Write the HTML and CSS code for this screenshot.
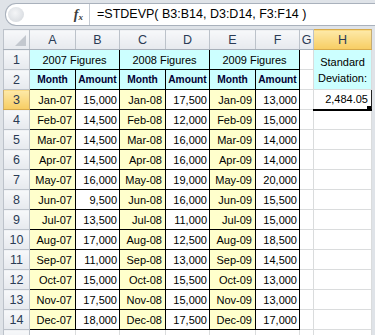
FILE: index.html
```html
<!DOCTYPE html>
<html lang="en">

<head>
    <meta charset="UTF-8">
    <meta name="viewport" content="width=device-width, initial-scale=1.0">

    <title>STDEVP</title>

    <link rel="stylesheet" href="styles.css">
</head>

<body>
    <!-- Formula bar -->
    <div class="formula-bar">
        <div class="fx-field">
            <div class="fx-tools">
                <span class="collapse-btn"></span>
                <span class="fx-label"><i>f</i><sub>x</sub></span>
            </div>
            <div class="formula">=STDEVP( B3:B14, D3:D14, F3:F14 )</div>
        </div>
    </div>

    <!-- Sheet grid -->
    <table class="sheet">
        <colgroup>
            <col class="c-rh">
            <col class="c-mo"><col class="c-amt">
            <col class="c-mo"><col class="c-amt">
            <col class="c-mo"><col class="c-amt">
            <col class="c-g"><col class="c-h">
        </colgroup>
        <tr class="col-heads">
            <th class="corner"><span class="corner-tri"></span></th>
            <th>A</th><th>B</th><th>C</th><th>D</th><th>E</th><th>F</th><th>G</th>
            <th class="active">H</th>
        </tr>
        <tr>
            <th class="rh">1</th>
            <td class="bx hd" colspan="2">2007 Figures</td>
            <td class="bx hd" colspan="2">2008 Figures</td>
            <td class="bx hd" colspan="2">2009 Figures</td>
            <td></td>
            <td class="hd std" rowspan="2">Standard<br>Deviation:</td>
        </tr>
        <tr>
            <th class="rh">2</th>
            <td class="bx hd b">Month</td><td class="bx hd b">Amount</td>
            <td class="bx hd b">Month</td><td class="bx hd b">Amount</td>
            <td class="bx hd b">Month</td><td class="bx hd b">Amount</td>
            <td></td>
        </tr>
        <tr>
            <th class="rh active">3</th>
            <td class="bx mo">Jan-07</td><td class="bx amt">15,000</td>
            <td class="bx mo">Jan-08</td><td class="bx amt">17,500</td>
            <td class="bx mo">Jan-09</td><td class="bx amt">13,000</td>
            <td></td>
            <td class="amt sel">2,484.05<span class="fill-handle"></span></td>
        </tr>
        <tr>
            <th class="rh">4</th>
            <td class="bx mo">Feb-07</td><td class="bx amt">14,500</td>
            <td class="bx mo">Feb-08</td><td class="bx amt">12,000</td>
            <td class="bx mo">Feb-09</td><td class="bx amt">15,000</td>
            <td></td><td></td>
        </tr>
        <tr>
            <th class="rh">5</th>
            <td class="bx mo">Mar-07</td><td class="bx amt">14,500</td>
            <td class="bx mo">Mar-08</td><td class="bx amt">16,000</td>
            <td class="bx mo">Mar-09</td><td class="bx amt">14,000</td>
            <td></td><td></td>
        </tr>
        <tr>
            <th class="rh">6</th>
            <td class="bx mo">Apr-07</td><td class="bx amt">14,500</td>
            <td class="bx mo">Apr-08</td><td class="bx amt">16,000</td>
            <td class="bx mo">Apr-09</td><td class="bx amt">14,000</td>
            <td></td><td></td>
        </tr>
        <tr>
            <th class="rh">7</th>
            <td class="bx mo">May-07</td><td class="bx amt">16,000</td>
            <td class="bx mo">May-08</td><td class="bx amt">19,000</td>
            <td class="bx mo">May-09</td><td class="bx amt">20,000</td>
            <td></td><td></td>
        </tr>
        <tr>
            <th class="rh">8</th>
            <td class="bx mo">Jun-07</td><td class="bx amt">9,500</td>
            <td class="bx mo">Jun-08</td><td class="bx amt">16,000</td>
            <td class="bx mo">Jun-09</td><td class="bx amt">15,500</td>
            <td></td><td></td>
        </tr>
        <tr>
            <th class="rh">9</th>
            <td class="bx mo">Jul-07</td><td class="bx amt">13,500</td>
            <td class="bx mo">Jul-08</td><td class="bx amt">11,000</td>
            <td class="bx mo">Jul-09</td><td class="bx amt">15,000</td>
            <td></td><td></td>
        </tr>
        <tr>
            <th class="rh">10</th>
            <td class="bx mo">Aug-07</td><td class="bx amt">17,000</td>
            <td class="bx mo">Aug-08</td><td class="bx amt">12,500</td>
            <td class="bx mo">Aug-09</td><td class="bx amt">18,500</td>
            <td></td><td></td>
        </tr>
        <tr>
            <th class="rh">11</th>
            <td class="bx mo">Sep-07</td><td class="bx amt">11,000</td>
            <td class="bx mo">Sep-08</td><td class="bx amt">13,000</td>
            <td class="bx mo">Sep-09</td><td class="bx amt">14,500</td>
            <td></td><td></td>
        </tr>
        <tr>
            <th class="rh">12</th>
            <td class="bx mo">Oct-07</td><td class="bx amt">15,000</td>
            <td class="bx mo">Oct-08</td><td class="bx amt">15,500</td>
            <td class="bx mo">Oct-09</td><td class="bx amt">13,000</td>
            <td></td><td></td>
        </tr>
        <tr>
            <th class="rh">13</th>
            <td class="bx mo">Nov-07</td><td class="bx amt">17,500</td>
            <td class="bx mo">Nov-08</td><td class="bx amt">15,000</td>
            <td class="bx mo">Nov-09</td><td class="bx amt">13,000</td>
            <td></td><td></td>
        </tr>
        <tr>
            <th class="rh">14</th>
            <td class="bx mo">Dec-07</td><td class="bx amt">18,000</td>
            <td class="bx mo">Dec-08</td><td class="bx amt">17,500</td>
            <td class="bx mo">Dec-09</td><td class="bx amt">17,000</td>
            <td></td><td></td>
        </tr>
        <tr>
            <th class="rh"></th>
            <td></td><td></td><td></td><td></td><td></td><td></td><td></td><td></td>
        </tr>
    </table>
</body>

</html>
```

FILE: styles.css
```css
/* General styles */
body {
    margin: 0;
    width: 375px;
    height: 335px;
    overflow: hidden;
    background: #dfe3e8;
    font-family: 'Liberation Sans', Arial, sans-serif;
    color: #000;
}

/* Formula bar */
.formula-bar {
    padding: 3px 0 3px 5px;
}

.fx-field {
    display: flex;
    height: 21px;
    border: 1px solid #a9b1bc;
    border-right: none;
    border-radius: 11px 0 0 11px;
    background: #fff;
}

.fx-tools {
    width: 84px;
    display: flex;
    align-items: center;
    justify-content: space-between;
    padding: 0 6px 0 2px;
    box-sizing: border-box;
    border-right: 1px solid #c6ccd4;
}

.collapse-btn {
    width: 16px;
    height: 15px;
    border-radius: 50%;
    background: radial-gradient(circle at 45% 40%, #f4f5f7 0%, #dfe2e6 60%, #cfd3d9 100%);
}

.fx-label {
    font-family: 'Liberation Serif', serif;
    font-weight: bold;
    font-size: 14px;
    color: #3c3c3c;
    line-height: 1;
}

.fx-label sub {
    font-size: 9px;
    font-style: italic;
    vertical-align: -1px;
}

.formula {
    padding-left: 7px;
    font-size: 12.5px;
    line-height: 21px;
    white-space: nowrap;
}

/* Sheet */
.sheet {
    margin-left: 3px;
    border-collapse: collapse;
    table-layout: fixed;
    width: 368px;
    font-size: 11px;
    background: #fff;
}

.c-rh { width: 26px; }
.c-mo { width: 46px; }
.c-amt { width: 44px; }
.c-g { width: 14px; }
.c-h { width: 58px; }

.sheet tr {
    height: 20px;
}

.sheet td {
    border: 1px solid #dadcdd;
    padding: 0 2px;
    white-space: nowrap;
    overflow: hidden;
    text-align: right;
}

.sheet th {
    font-weight: normal;
    font-size: 12.5px;
    color: #2a3b55;
    border: 1px solid #bcc2ca;
    background: linear-gradient(#f7f8fa, #e6e9ee);
    padding: 0;
}

.rh {
    background: #e8ebf0;
    text-align: center;
}

.col-heads th {
    border-bottom-color: #a8b0ba;
}

.sheet th.active {
    background: linear-gradient(#fde9a8, #f7cd62);
    border-color: #d6aa4c #c5ac74;
}

.rh.active {
    background: #fbd476;
}

.corner {
    position: relative;
}

.corner-tri {
    position: absolute;
    right: 3px;
    bottom: 3px;
    border-style: solid;
    border-width: 0 0 11px 11px;
    border-color: transparent transparent #c3c8cf transparent;
}

/* Data cells */
.sheet td.bx {
    border: 1px solid #000;
}

.hd {
    background: #ccffff;
    text-align: center !important;
}

.b {
    font-weight: bold;
    font-size: 10.2px;
    color: #000033;
}

.mo {
    background: #ffffcc;
    padding-right: 3px !important;
}

.std {
    line-height: 16px;
    padding-top: 1px !important;
}

/* Selected cell */
.sheet td.sel {
    position: relative;
    border: 1px solid #222;
    border-bottom: 2px solid #000;
    padding-right: 3px;
}

.fill-handle {
    position: absolute;
    right: -2px;
    bottom: -3px;
    width: 5px;
    height: 5px;
    background: #000;
    border: 1px solid #fff;
}
```
